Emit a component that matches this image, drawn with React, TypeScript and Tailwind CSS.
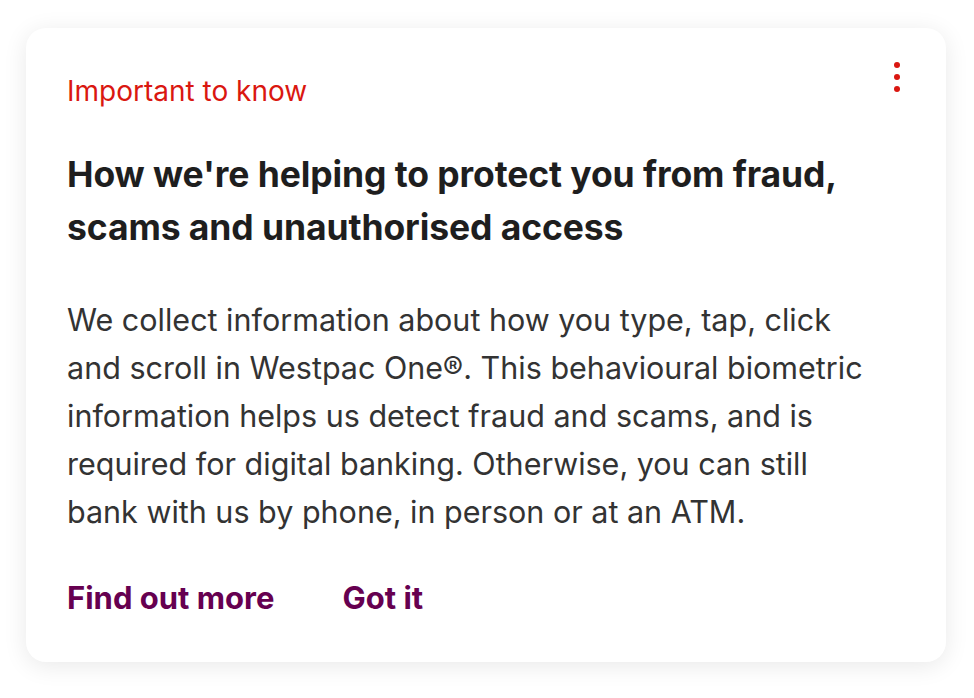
import React from 'react';

function MoreIcon() {
  return (
    <svg width="10" height="34" viewBox="0 0 10 34" aria-hidden="true">
      <circle cx="5" cy="5" r="3" fill="#da1710" />
      <circle cx="5" cy="17" r="3" fill="#da1710" />
      <circle cx="5" cy="29" r="3" fill="#da1710" />
    </svg>
  );
}

export default function App() {
  return (
    <div className="min-h-[698px] bg-white pt-[28px] pl-[26px] pr-[28px] font-['Inter',sans-serif]">
      <div className="relative w-[920px] h-[634px] rounded-[20px] bg-white shadow-[0_4px_24px_rgba(0,0,0,0.09)] px-[41px] pt-[43px]">
        <button className="absolute right-[44px] top-[32px] p-0" aria-label="More options">
          <MoreIcon />
        </button>

        <p className="text-[28px] leading-[40px] text-[#da1710]">Important to know</p>

        <h2 className="mt-[37px] text-[35.5px] leading-[53px] font-bold text-[#1e1e1e] tracking-[-0.1px]">
          How we're helping to protect you from fraud,
          <br />
          scams and unauthorised access
        </h2>

        <p className="mt-[42px] text-[30.5px] leading-[48px] text-[#333333]">
          We collect information about how you type, tap, click
          <br />
          and scroll in Westpac One®. This behavioural biometric
          <br />
          information helps us detect fraud and scams, and is
          <br />
          required for digital banking. Otherwise, you can still
          <br />
          bank with us by phone, in person or at an ATM.
        </p>

        <div className="mt-[42px] flex items-center gap-[68px]">
          <button className="text-[31px] font-bold text-[#660050] leading-[40px]">Find out more</button>
          <button className="text-[31px] font-bold text-[#660050] leading-[40px]">Got it</button>
        </div>
      </div>
    </div>
  );
}
